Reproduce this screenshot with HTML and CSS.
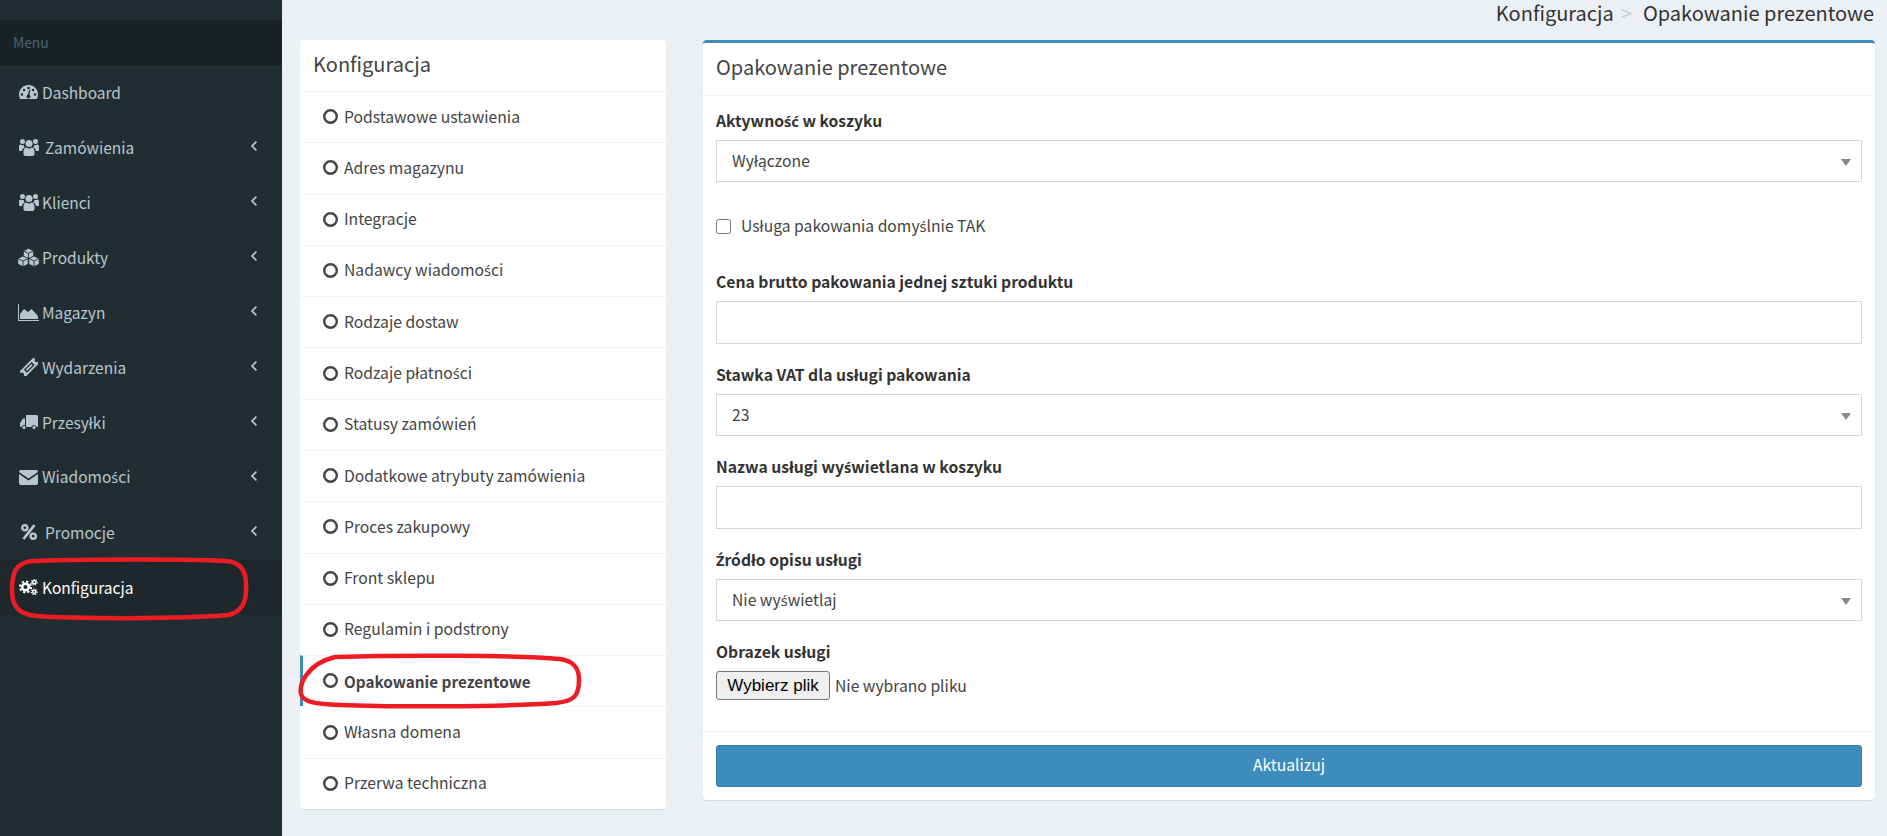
FILE: index.html
```html
<!DOCTYPE html>
<html lang="pl">
<head>
<meta charset="utf-8">
<title>Opakowanie prezentowe</title>
<link rel="stylesheet" href="styles.css">
</head>
<body>
<svg class="defs" aria-hidden="true">
  <defs>
    <symbol id="i-dash" viewBox="0 0 19 14">
      <path fill="currentColor" d="M9.5 0C4.3 0 0 4.2 0 9.5c0 1.6.4 3.1 1.1 4.5h16.8c.7-1.4 1.1-2.9 1.1-4.5C19 4.2 14.7 0 9.5 0z"/>
      <g fill="#222d32"><circle cx="3" cy="9.5" r="1.3"/><circle cx="5" cy="5" r="1.3"/><circle cx="9.5" cy="3" r="1.3"/><circle cx="14" cy="5" r="1.3"/><circle cx="16" cy="9.5" r="1.3"/><circle cx="9.5" cy="11.5" r="2"/><path d="M8.6 11l1.6-6.5 1 .3-1 6.7z"/></g>
    </symbol>
    <symbol id="i-users" viewBox="0 0 20 18">
      <g fill="currentColor"><circle cx="10" cy="5.5" r="3.5"/><circle cx="3.5" cy="3.5" r="2.5"/><circle cx="16.5" cy="3.5" r="2.5"/>
      <path d="M4.5 16v-2.5c0-2.5 1.5-4 3-4 .7.6 1.5 1 2.5 1s1.8-.4 2.5-1c1.500 0 3 1.500 3 4V16c0 1.200-1 2-2.200 2H6.700c-1.200 0-2.200-.8-2.200-2z"/>
      <path d="M0 8.500C0 7.300.8 6.500 1.800 6.500c.5.400 1.100.600 1.700.600.600 0 .900-.1 1.200-.2 0 1 .5 2 1.300 2.700-1.700.5-2.800 2-3 3.400H1c-.6 0-1-.4-1-1z"/>
      <path d="M20 8.500c0-1.200-.8-2-1.800-2-.5.400-1.100.600-1.700.600-.6 0-.9-.1-1.200-.2 0 1-.5 2-1.300 2.700 1.700.5 2.800 2 3 3.400H19c.6 0 1-.4 1-1z"/></g>
    </symbol>
    <symbol id="i-cubes" viewBox="0 0 23 19">
      <g fill="currentColor" stroke="#222d32" stroke-width=".9" stroke-linejoin="round">
        <path d="M11.500.3l5.200 2.500v5.700l-5.200 2.500-5.200-2.500V2.800z"/><path fill="none" d="M6.300 2.800l5.200 2.500 5.200-2.500M11.500 5.300V11"/>
        <path d="M6 8l5.200 2.500v5.700L6 18.700.8 16.200v-5.700z"/><path fill="none" d="M.8 10.500L6 13l5.200-2.500M6 13v5.700"/>
        <path d="M17 8l5.200 2.500v5.700L17 18.700l-5.200-2.500v-5.700z"/><path fill="none" d="M11.800 10.500L17 13l5.200-2.500M17 13v5.700"/>
      </g>
    </symbol>
    <symbol id="i-area" viewBox="0 0 21 17">
      <path fill="currentColor" d="M0 0h1v16h20v1H0zM2 15v-5l4-5 4 3 3.500-3 6.500 7v3z"/>
    </symbol>
    <symbol id="i-ticket" viewBox="0 0 18 18">
      <path fill="currentColor" fill-rule="evenodd" transform="rotate(-45 9 9)" d="M-1 5.500h20v2.200a1.800 1.800 0 0 0 0 3.600v2.200H-1v-2.200a1.800 1.800 0 0 0 0-3.600zM3.500 7.300v4.400h11V7.300z"/>
      <path fill="currentColor" transform="rotate(-45 9 9)" d="M5 8.600h8v1.800H5z"/>
    </symbol>
    <symbol id="i-truck" viewBox="0 0 18 15">
      <path fill="currentColor" d="M6 0h10.500c.8 0 1.500.7 1.500 1.500V12h-1.300a3 3 0 0 0-5.400 0H6.700A3 3 0 0 0 6 11zM5 3.500v7.300a3 3 0 0 0-3.700 1.200H1c-.6 0-1-.4-1-1V8l3-4.500z"/>
      <circle cx="4" cy="12.500" r="2" fill="currentColor" stroke="#222d32" stroke-width=".8"/><circle cx="14" cy="12.500" r="2" fill="currentColor" stroke="#222d32" stroke-width=".8"/>
    </symbol>
    <symbol id="i-mail" viewBox="0 0 19 15">
      <path fill="currentColor" d="M2 0h15a2 2 0 0 1 2 2L9.500 8.500 0 2a2 2 0 0 1 2-2zM0 4l9.500 6.500L19 4v9a2 2 0 0 1-2 2H2a2 2 0 0 1-2-2z"/>
    </symbol>
    <symbol id="i-percent" viewBox="0 0 16 16">
      <g fill="none" stroke="currentColor" stroke-width="2.400"><circle cx="3.800" cy="3.800" r="2.600"/><circle cx="12.200" cy="12.200" r="2.600"/><path stroke-width="2.800" d="M13.500 1L2.500 15"/></g>
    </symbol>
    <symbol id="i-cogs" viewBox="0 0 19 16">
      <g fill="none" stroke="currentColor"><circle cx="6.500" cy="8" r="3.300" stroke-width="2.600"/><circle cx="6.500" cy="8" r="5.500" stroke-width="2" stroke-dasharray="2.300 2"/>
      <circle cx="15.200" cy="3.200" r="1.600" stroke-width="1.400"/><circle cx="15.200" cy="3.200" r="2.800" stroke-width="1.200" stroke-dasharray="1.300 1.100"/>
      <circle cx="15.200" cy="12.800" r="1.600" stroke-width="1.400"/><circle cx="15.200" cy="12.800" r="2.800" stroke-width="1.200" stroke-dasharray="1.300 1.100"/></g>
    </symbol>
    <symbol id="i-angle" viewBox="0 0 6 10">
      <path fill="none" stroke="currentColor" stroke-width="1.700" d="M5.400.6L1 5l4.400 4.400"/>
    </symbol>
    <symbol id="i-circle" viewBox="0 0 15 15">
      <circle cx="7.500" cy="7.500" r="6.300" fill="none" stroke="currentColor" stroke-width="2.400"/>
    </symbol>
  </defs>
</svg>

<aside class="sidebar">
  <div class="menu-label">Menu</div>
  <ul class="side-menu">
    <li><a class="side-link"><span class="side-icon"><svg class="ic ic-dash"><use href="#i-dash"/></svg></span><span>Dashboard</span></a></li>
    <li><a class="side-link"><span class="side-icon"><svg class="ic ic-users"><use href="#i-users"/></svg></span><span class="wide">Zamówienia</span><svg class="angle"><use href="#i-angle"/></svg></a></li>
    <li><a class="side-link"><span class="side-icon"><svg class="ic ic-users"><use href="#i-users"/></svg></span><span>Klienci</span><svg class="angle"><use href="#i-angle"/></svg></a></li>
    <li><a class="side-link"><span class="side-icon"><svg class="ic ic-cubes"><use href="#i-cubes"/></svg></span><span>Produkty</span><svg class="angle"><use href="#i-angle"/></svg></a></li>
    <li><a class="side-link"><span class="side-icon"><svg class="ic ic-area"><use href="#i-area"/></svg></span><span>Magazyn</span><svg class="angle"><use href="#i-angle"/></svg></a></li>
    <li><a class="side-link"><span class="side-icon"><svg class="ic ic-ticket"><use href="#i-ticket"/></svg></span><span>Wydarzenia</span><svg class="angle"><use href="#i-angle"/></svg></a></li>
    <li><a class="side-link"><span class="side-icon"><svg class="ic ic-truck"><use href="#i-truck"/></svg></span><span>Przesyłki</span><svg class="angle"><use href="#i-angle"/></svg></a></li>
    <li><a class="side-link"><span class="side-icon"><svg class="ic ic-mail"><use href="#i-mail"/></svg></span><span>Wiadomo<span class="pl">ś</span>ci</span><svg class="angle"><use href="#i-angle"/></svg></a></li>
    <li><a class="side-link"><span class="side-icon"><svg class="ic ic-percent"><use href="#i-percent"/></svg></span><span class="wide">Promocje</span><svg class="angle"><use href="#i-angle"/></svg></a></li>
    <li class="is-active"><a class="side-link"><span class="side-icon"><svg class="ic ic-cogs"><use href="#i-cogs"/></svg></span><span>Konfiguracja</span></a></li>
  </ul>
</aside>

<main class="content">
  <nav class="crumbs"><span>Konfiguracja</span><span class="crumb-sep">&gt;</span><span>Opakowanie prezentowe</span></nav>
  <div class="columns">
    <section class="card card-nav">
      <h2 class="nav-title">Konfiguracja</h2>
      <ul class="nav-list">
        <li class="nav-item"><svg class="dot"><use href="#i-circle"/></svg><span>Podstawowe ustawienia</span></li>
        <li class="nav-item"><svg class="dot"><use href="#i-circle"/></svg><span>Adres magazynu</span></li>
        <li class="nav-item"><svg class="dot"><use href="#i-circle"/></svg><span>Integracje</span></li>
        <li class="nav-item"><svg class="dot"><use href="#i-circle"/></svg><span>Nadawcy wiadomo<span class="pl">ś</span>ci</span></li>
        <li class="nav-item"><svg class="dot"><use href="#i-circle"/></svg><span>Rodzaje dostaw</span></li>
        <li class="nav-item"><svg class="dot"><use href="#i-circle"/></svg><span>Rodzaje płatno<span class="pl">ś</span>ci</span></li>
        <li class="nav-item"><svg class="dot"><use href="#i-circle"/></svg><span>Statusy zamówień</span></li>
        <li class="nav-item"><svg class="dot"><use href="#i-circle"/></svg><span>Dodatkowe atrybuty zamówienia</span></li>
        <li class="nav-item"><svg class="dot"><use href="#i-circle"/></svg><span>Proces zakupowy</span></li>
        <li class="nav-item"><svg class="dot"><use href="#i-circle"/></svg><span>Front sklepu</span></li>
        <li class="nav-item"><svg class="dot"><use href="#i-circle"/></svg><span>Regulamin i podstrony</span></li>
        <li class="nav-item nav-current"><svg class="dot"><use href="#i-circle"/></svg><span>Opakowanie prezentowe</span></li>
        <li class="nav-item"><svg class="dot"><use href="#i-circle"/></svg><span>Własna domena</span></li>
        <li class="nav-item"><svg class="dot"><use href="#i-circle"/></svg><span>Przerwa techniczna</span></li>
      </ul>
    </section>

    <section class="card card-form">
      <h2 class="form-title">Opakowanie prezentowe</h2>
      <form class="form-body">
        <div class="field">
          <label class="field-label">Aktywno<span class="pl">ść</span> w koszyku</label>
          <div class="control select">Wyłączone</div>
        </div>
        <label class="check-row"><input class="check" type="checkbox"><span>Usługa pakowania domy<span class="pl">ś</span>lnie TAK</span></label>
        <div class="field">
          <label class="field-label">Cena brutto pakowania jednej sztuki produktu</label>
          <input class="control text-input" type="text">
        </div>
        <div class="field">
          <label class="field-label">Stawka VAT dla usługi pakowania</label>
          <div class="control select">23</div>
        </div>
        <div class="field">
          <label class="field-label">Nazwa usługi wy<span class="pl">ś</span>wietlana w koszyku</label>
          <input class="control text-input" type="text">
        </div>
        <div class="field">
          <label class="field-label"><span class="pl">Ź</span>ródło opisu usługi</label>
          <div class="control select">Nie wy<span class="pl">ś</span>wietlaj</div>
        </div>
        <div class="field">
          <label class="field-label">Obrazek usługi</label>
          <div class="file-row"><button class="file-btn" type="button">Wybierz plik</button><span class="file-name">Nie wybrano pliku</span></div>
        </div>
      </form>
      <div class="form-footer"><button class="submit" type="button">Aktualizuj</button></div>
    </section>
  </div>
</main>

<svg class="marks" viewBox="0 0 1887 836" aria-hidden="true">
  <path class="mark" d="M32 561C90 559 190 559 226 561C240 562 246 570 246 584C247 602 242 612 228 615C180 619 80 619 36 616C18 614 12 606 12 590C12 572 16 563 32 561z"/>
  <path class="mark" d="M335 657C400 655 520 655 560 659C574 661 579 668 579 680C579 696 574 701 556 703C500 707 390 707 340 705C315 704 303 702 301 694C299 684 307 664 335 657z"/>
</svg>
</body>
</html>
```

FILE: styles.css
```css
* { box-sizing: border-box; }

html, body {
  margin: 0;
  height: 100%;
  overflow: hidden;
}

body {
  display: flex;
  background: #ecf0f5;
  color: #444;
  font-family: "Noto Sans CJK SC", "Noto Sans", sans-serif;
  font-size: 15.7px;
  line-height: 22px;
}

.pl {
  font-family: "Noto Sans", sans-serif;
  font-size: .93em;
}

.defs {
  position: absolute;
  width: 0;
  height: 0;
}

.sidebar {
  flex: 0 0 282px;
  padding-top: 20px;
  background: #222d32;
  color: #b8c7ce;
  font-size: 15.5px;
}

.menu-label {
  height: 45px;
  padding-left: 13px;
  background: #1a2226;
  color: #4b646f;
  font-size: 13.8px;
  line-height: 44px;
}

.side-menu, .nav-list {
  margin: 0;
  padding: 0;
  list-style: none;
}

.side-link {
  display: flex;
  align-items: center;
  height: 55px;
  padding: 0 25px 2px 17px;
}

.is-active {
  background: #1e282c;
  color: #fff;
}

.side-icon {
  flex: 0 0 25px;
  display: flex;
  align-items: center;
  justify-content: center;
  padding: 1px 2px 0 0;
}

.wide { margin-left: 3px; }

.ic { display: block; }
.ic-dash { width: 19px; height: 14px; }
.ic-users { width: 20px; height: 18px; }
.ic-cubes { width: 23px; height: 19px; }
.ic-area { width: 21px; height: 17px; }
.ic-ticket { width: 18px; height: 18px; }
.ic-truck { width: 18px; height: 15px; }
.ic-mail { width: 19px; height: 15px; }
.ic-percent { width: 16px; height: 16px; }
.ic-cogs { width: 19px; height: 16px; }

.angle {
  width: 6px;
  height: 10px;
  margin: -1px 0 0 auto;
}

.content {
  flex: 1;
  min-width: 0;
  padding-right: 12px;
}

.crumbs {
  display: flex;
  justify-content: flex-end;
  height: 40px;
  padding-right: 1px;
  color: #333;
  font-size: 20px;
  line-height: 26px;
}

.crumb-sep {
  margin: 0 11px 0 7px;
  color: #ccc;
}

.columns {
  display: flex;
  align-items: flex-start;
  gap: 37px;
  padding-left: 18px;
}

.card {
  background: #fff;
  border-radius: 4px;
  box-shadow: 0 1px 1px rgba(0, 0, 0, .1);
}

.card-nav {
  flex: 0 0 366px;
  height: 769px;
  display: flex;
  flex-direction: column;
}

.nav-title {
  flex: 0 0 52px;
  margin: 0;
  padding: 11px 13px 0;
  border-bottom: 1px solid #f4f4f4;
  font-size: 20px;
  font-weight: 400;
  line-height: 26px;
}

.nav-list {
  flex: 1;
  display: flex;
  flex-direction: column;
}

.nav-item {
  flex: 1;
  display: flex;
  align-items: center;
  padding: 0 0 1px 23px;
  border-top: 1px solid #f4f4f4;
}

.nav-item:first-child { border-top: 0; }

.nav-current {
  padding-left: 20px;
  border-left: 3px solid #3c8dbc;
  font-size: 15.3px;
  font-weight: 700;
}

.dot {
  flex: none;
  width: 15px;
  height: 15px;
  margin-right: 6px;
}

.card-form {
  flex: 1;
  min-width: 0;
  height: 760px;
  border-top: 3px solid #3c8dbc;
}

.form-title {
  height: 53px;
  margin: 0;
  padding: 11px 13px 0;
  border-bottom: 1px solid #f4f4f4;
  font-size: 20px;
  font-weight: 400;
  line-height: 26px;
}

.form-body {
  height: 635px;
  padding: 14px 13px 0;
}

.field { margin-bottom: 20px; }

.field-label {
  display: block;
  height: 21px;
  margin-bottom: 9px;
  color: #333;
  font-weight: 700;
  line-height: 21px;
}

.control {
  display: block;
  width: 100%;
  height: 43px;
  padding: 0 15px;
  border: 1px solid #d2d6de;
  border-radius: 0;
  background: #fff;
  color: #444;
  font: inherit;
}

.select {
  position: relative;
  height: 42px;
  line-height: 39px;
}

.select::after {
  content: "";
  position: absolute;
  top: 18px;
  right: 10px;
  border: 5px solid transparent;
  border-top: 7px solid #888;
  border-bottom: 0;
}

.check-row {
  display: flex;
  align-items: center;
  height: 22px;
  margin: 33px 0 34px;
}

.check {
  width: 15px;
  height: 15px;
  margin: 1px 10px 0 0;
}

.file-row {
  display: flex;
  align-items: center;
}

.file-btn {
  width: 114px;
  height: 29px;
  margin-right: 5px;
  padding: 0;
  border: 1px solid #767676;
  border-radius: 3px;
  background: #efefef;
  color: #000;
  font-family: "Liberation Sans", Arial, sans-serif;
  font-size: 17px;
}

.form-footer {
  padding: 13px 13px 0;
  border-top: 1px solid #f4f4f4;
}

.submit {
  display: block;
  width: 100%;
  height: 42px;
  padding-bottom: 3px;
  border: 1px solid #367fa9;
  border-radius: 3px;
  background: #3c8dbc;
  color: #fff;
  font: inherit;
}

.marks {
  position: absolute;
  top: 0;
  left: 0;
  width: 1887px;
  height: 836px;
  pointer-events: none;
}

.mark {
  fill: none;
  stroke: #ed1c24;
  stroke-width: 4.5;
}
```
